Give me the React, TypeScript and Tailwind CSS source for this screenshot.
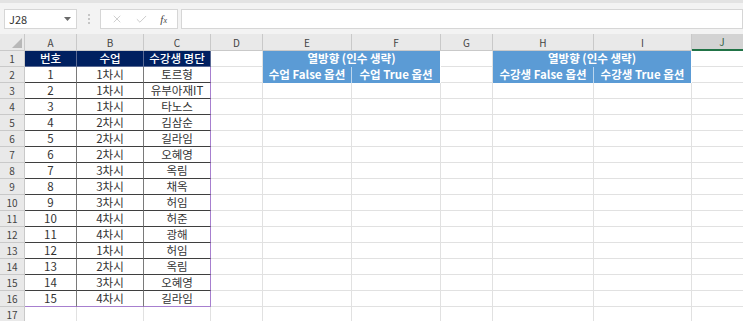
import { X, Check } from 'lucide-react';

type Col = { key: string; w: number };

const cols: Col[] = [
  { key: 'A', w: 52 },
  { key: 'B', w: 67 },
  { key: 'C', w: 67 },
  { key: 'D', w: 52 },
  { key: 'E', w: 89 },
  { key: 'F', w: 89 },
  { key: 'G', w: 52 },
  { key: 'H', w: 101 },
  { key: 'I', w: 98 },
  { key: 'J', w: 60 },
];

const students: [number, string, string][] = [
  [1, '1차시', '토르형'],
  [2, '1차시', '유부아재IT'],
  [3, '1차시', '타노스'],
  [4, '2차시', '김삼순'],
  [5, '2차시', '길라임'],
  [6, '2차시', '오혜영'],
  [7, '3차시', '옥림'],
  [8, '3차시', '채옥'],
  [9, '3차시', '허임'],
  [10, '4차시', '허준'],
  [11, '4차시', '광해'],
  [12, '1차시', '허임'],
  [13, '2차시', '옥림'],
  [14, '3차시', '오혜영'],
  [15, '4차시', '길라임'],
];

const font = { fontFamily: '"Noto Sans CJK KR", "Noto Sans", sans-serif' };

const RowHead = ({ n }: { n: number }) => (
  <div className="w-[25px] shrink-0 h-full flex items-center justify-center bg-[#e9e9e9] border-r border-b border-[#c9c9c9] text-[10px] text-[#444]">
    {n}
  </div>
);

const Blank = ({ w }: { w: number }) => (
  <div className="shrink-0 h-full border-r border-b border-[#e1e1e1] bg-white" style={{ width: w }} />
);

const App: React.FC = () => {
  return (
    <div className="w-[743px] h-[321px] overflow-hidden bg-[#f3f3f3] text-[#333]" style={font}>
      {/* Formula bar */}
      <div className="h-[3px] bg-[#e3e3e3]" />
      <div className="h-[31px] flex items-start pt-[6px]">
        <div className="ml-[4px] w-[73px] h-[20px] bg-white border border-[#d6d6d6] flex items-center justify-between pl-[4px] pr-[5px]">
          <span className="text-[11px] text-[#333]">J28</span>
          <svg width="7" height="4" viewBox="0 0 7 4">
            <path d="M0 0 L7 0 L3.5 4 Z" fill="#6a6a6a" />
          </svg>
        </div>
        <div className="w-[23px] h-[20px] flex items-center justify-center">
          <svg width="2" height="10" viewBox="0 0 2 10">
            <rect x="0" y="0" width="2" height="2" fill="#c6c6c6" />
            <rect x="0" y="4" width="2" height="2" fill="#c6c6c6" />
            <rect x="0" y="8" width="2" height="2" fill="#c6c6c6" />
          </svg>
        </div>
        <div className="w-[78px] h-[20px] bg-white border border-[#d6d6d6] flex items-center justify-around px-[4px]">
          <X size={12} strokeWidth={1.3} color="#b5b5b5" />
          <Check size={13} strokeWidth={1.3} color="#b5b5b5" />
          <span className="text-[11px] italic text-[#444]" style={{ fontFamily: '"Liberation Serif", serif' }}>
            f<span className="text-[8px]">x</span>
          </span>
        </div>
        <div className="ml-[3px] flex-1 h-[20px] bg-white border border-[#d6d6d6]" />
      </div>

      {/* Column headers */}
      <div className="flex h-[17px]">
        <div className="w-[25px] shrink-0 h-full bg-[#e9e9e9] border-r border-b border-[#c9c9c9] flex items-end justify-end pr-[2px] pb-[2px]">
          <svg width="10" height="10" viewBox="0 0 10 10">
            <path d="M10 0 L10 10 L0 10 Z" fill="#b8b8b8" />
          </svg>
        </div>
        {cols.map((c) =>
          c.key === 'J' ? (
            <div
              key={c.key}
              className="shrink-0 h-full flex items-center justify-center bg-[#d3d3d3] border-b-2 border-[#217346] text-[10px] text-[#2f5f45]"
              style={{ width: c.w }}
            >
              {c.key}
            </div>
          ) : (
            <div
              key={c.key}
              className="shrink-0 h-full flex items-center justify-center bg-[#e9e9e9] border-r border-b border-[#c9c9c9] text-[10px] text-[#444]"
              style={{ width: c.w }}
            >
              {c.key}
            </div>
          )
        )}
      </div>

      {/* Row 1 */}
      <div className="flex h-[16px] text-[11.5px] leading-none">
        <RowHead n={1} />
        <div className="w-[52px] shrink-0 h-full flex items-center justify-center bg-[#002060] text-white font-medium border-r border-b border-[#5a6a94]">번호</div>
        <div className="w-[67px] shrink-0 h-full flex items-center justify-center bg-[#002060] text-white font-medium border-r border-b border-[#5a6a94]">수업</div>
        <div className="w-[67px] shrink-0 h-full flex items-center justify-center bg-[#002060] text-white font-medium border-r border-b border-[#5a6a94]">수강생 명단</div>
        <Blank w={52} />
        <div className="w-[178px] shrink-0 h-full flex items-center justify-center bg-[#5b9bd5] text-white font-semibold border-r border-[#ffffff]">열방향 (인수 생략)</div>
        <Blank w={52} />
        <div className="w-[199px] shrink-0 h-full flex items-center justify-center bg-[#5b9bd5] text-white font-semibold border-r border-[#ffffff]">열방향 (인수 생략)</div>
        <Blank w={60} />
      </div>

      {/* Data rows */}
      {students.map(([no, cls, name], i) => {
        const last = i === students.length - 1;
        const bottom = last ? 'border-b border-[#a77fcf]' : 'border-b border-[#3f3f3f]';
        return (
          <div key={no} className="flex h-[16px] text-[11.5px] leading-none">
            <RowHead n={i + 2} />
            <div className={`w-[52px] shrink-0 h-full flex items-center justify-center bg-white border-r border-r-[#7a7a7a] ${bottom}`}>{no}</div>
            <div className={`w-[67px] shrink-0 h-full flex items-center justify-center bg-white border-r border-r-[#7a7a7a] ${bottom}`}>{cls}</div>
            <div className={`w-[67px] shrink-0 h-full flex items-center justify-center bg-white border-r border-r-[#a77fcf] ${bottom}`}>{name}</div>
            <Blank w={52} />
            {i === 0 ? (
              <>
                <div className="w-[89px] shrink-0 h-full flex items-center justify-center bg-[#5b9bd5] text-white font-semibold border-r border-[#bcd6ee]">수업 False 옵션</div>
                <div className="w-[89px] shrink-0 h-full flex items-center justify-center bg-[#5b9bd5] text-white font-semibold border-r border-white">수업 True 옵션</div>
                <Blank w={52} />
                <div className="w-[101px] shrink-0 h-full flex items-center justify-center bg-[#5b9bd5] text-white font-semibold border-r border-[#bcd6ee]">수강생 False 옵션</div>
                <div className="w-[98px] shrink-0 h-full flex items-center justify-center bg-[#5b9bd5] text-white font-semibold border-r border-white">수강생 True 옵션</div>
              </>
            ) : (
              <>
                <Blank w={89} />
                <Blank w={89} />
                <Blank w={52} />
                <Blank w={101} />
                <Blank w={98} />
              </>
            )}
            <Blank w={60} />
          </div>
        );
      })}

      {/* Row 17 */}
      <div className="flex h-[16px]">
        <RowHead n={17} />
        {cols.map((c) => (
          <Blank key={c.key} w={c.w} />
        ))}
      </div>
    </div>
  );
};

export default App;
